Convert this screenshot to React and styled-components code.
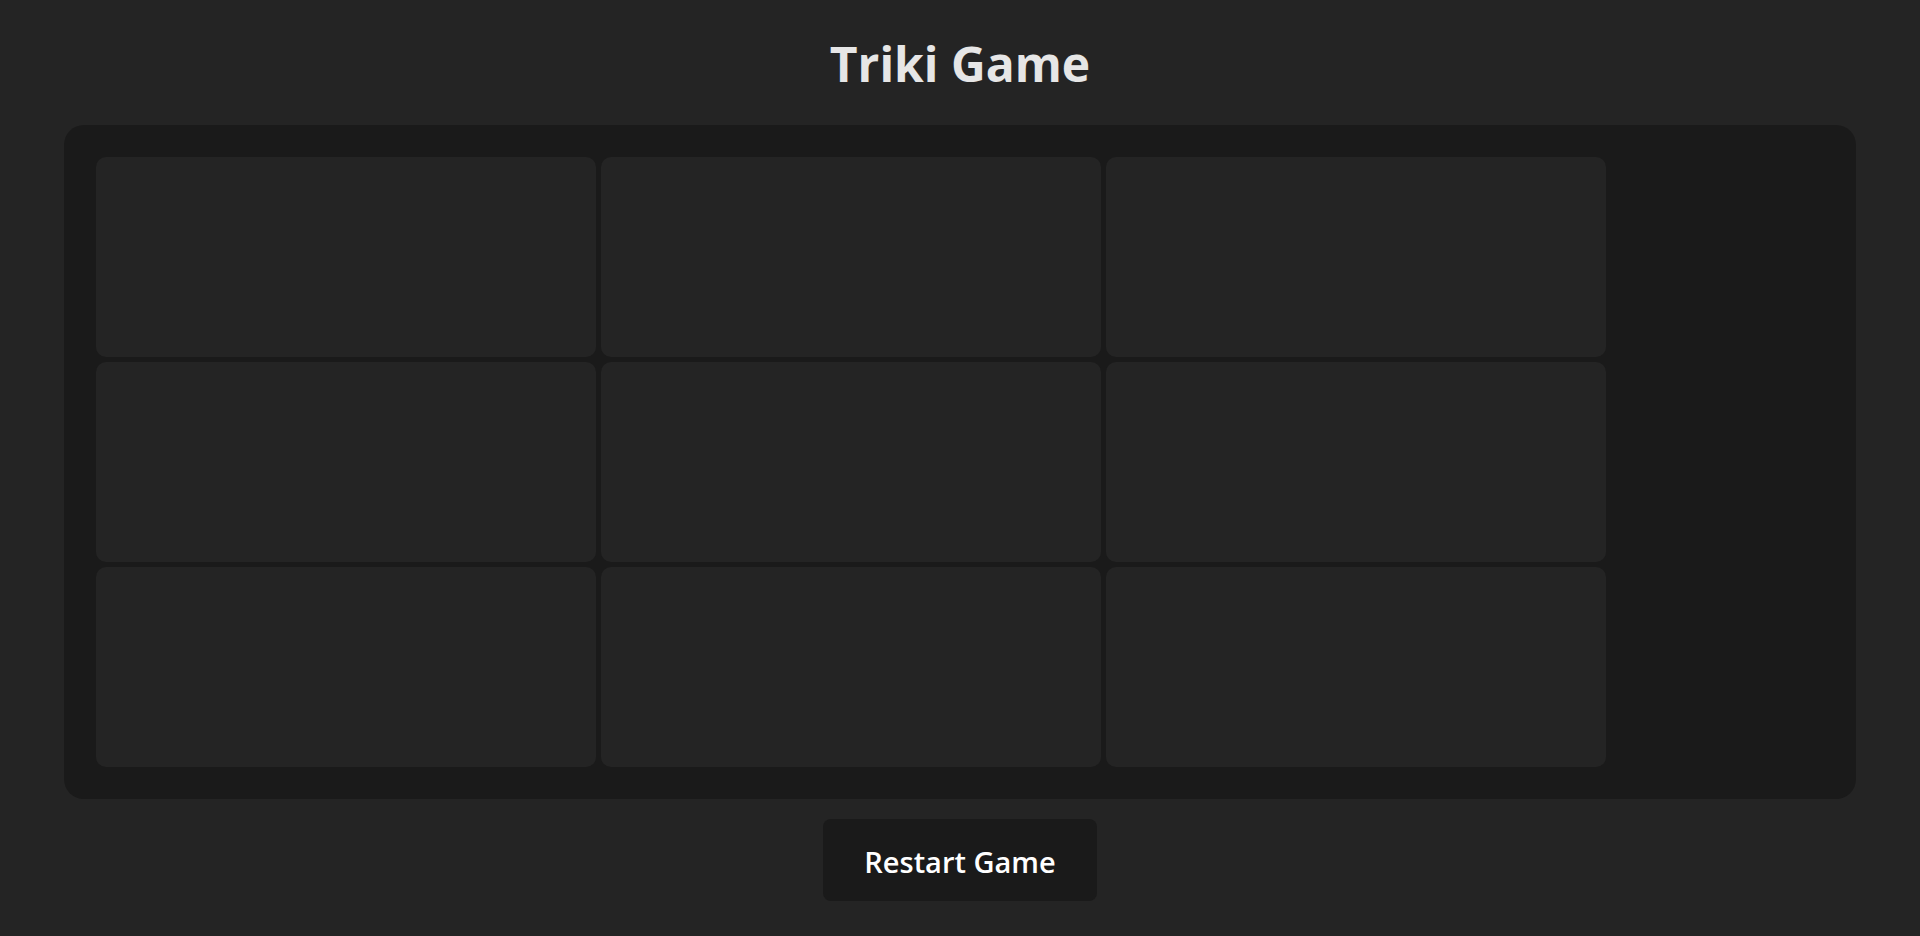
import React, { useState } from 'react';
import styled, { createGlobalStyle } from 'styled-components';

const GlobalStyle = createGlobalStyle`
    body {
        margin: 0;
        background-color: #242424;
        font-family: 'Open Sans', 'Noto Sans', sans-serif;
    }
`;

const Page = styled.div`
    display: flex;
    flex-direction: column;
    align-items: center;
    min-height: 100vh;
`;

const Title = styled.h1`
    margin: 0 0 37px;
    padding-top: 40px;
    font-size: 48px;
    line-height: 48px;
    font-weight: 700;
    color: #e6e6e6;
`;

const Board = styled.div`
    align-self: stretch;
    margin: 0 64px;
    padding: 32px;
    background-color: #1a1a1a;
    border-radius: 20px;
    display: grid;
    grid-template-columns: repeat(3, 500px);
    grid-auto-rows: 200px;
    gap: 5px;
`;

const Cell = styled.button`
    border: none;
    border-radius: 10px;
    background-color: #242424;
    color: #e6e6e6;
    font-family: inherit;
    font-size: 96px;
    font-weight: 700;
    cursor: pointer;
`;

const RestartButton = styled.button`
    margin-top: 20px;
    width: 274px;
    padding: 23px 0 19px;
    border: none;
    border-radius: 8px;
    background-color: #1a1a1a;
    color: #ffffff;
    font-family: inherit;
    font-size: 29px;
    line-height: 40px;
    font-weight: 600;
    cursor: pointer;
`;

function App() {
    const [cells, setCells] = useState(Array(9).fill(null));
    const [turn, setTurn] = useState('X');

    const play = (i) => {
        if (cells[i]) return;
        const next = [...cells];
        next[i] = turn;
        setCells(next);
        setTurn(turn === 'X' ? 'O' : 'X');
    };

    const restart = () => {
        setCells(Array(9).fill(null));
        setTurn('X');
    };

    return (
        <>
            <GlobalStyle />
            <Page>
                <Title>Triki Game</Title>
                <Board>
                    {cells.map((value, index) => (
                        <Cell key={index} onClick={() => play(index)}>
                            {value}
                        </Cell>
                    ))}
                </Board>
                <RestartButton onClick={restart}>Restart Game</RestartButton>
            </Page>
        </>
    );
}

export default App;
